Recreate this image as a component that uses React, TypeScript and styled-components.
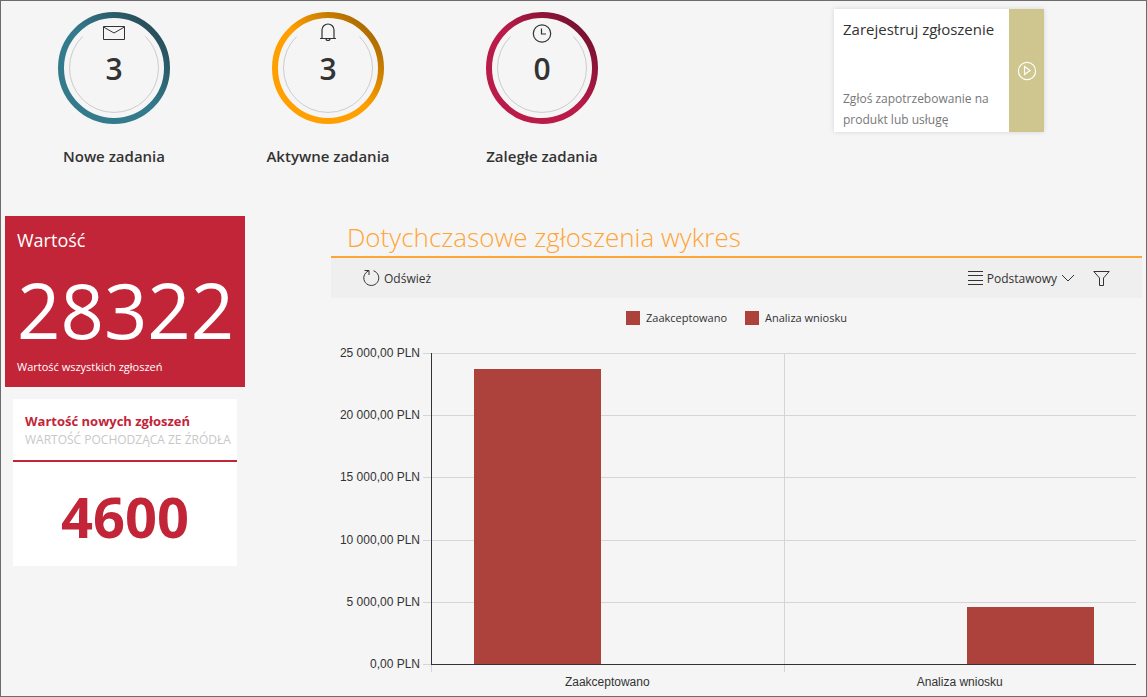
import React from 'react';
import styled, { createGlobalStyle } from 'styled-components';

const ui = '"Open Sans", "Noto Sans", sans-serif';
const red = '#c22538';
const barColor = '#ad413c';

const GlobalStyle = createGlobalStyle`
  *, *::before, *::after { box-sizing: border-box; }
  body { margin: 0; background: #f5f5f5; color: #333; font-family: ${ui}; }
  h2, h3, p, ul { margin: 0; padding: 0; font-weight: 400; }
  button { font: inherit; color: inherit; background: none; border: 0; padding: 0; cursor: pointer; }
`;

const Page = styled.main`
  min-height: 100vh;
  border: 1px solid #6d6b6d;
  padding: 8px 4px 0;
`;

const TopRow = styled.section`
  display: flex;
  align-items: flex-start;
  justify-content: space-between;
  padding: 0 98px 0 2px;
  height: 207px;
`;

const Tiles = styled.div`
  display: flex;
`;

const Tile = styled.a`
  display: flex;
  flex-direction: column;
  align-items: center;
  width: 214px;
  padding-top: 3px;
  color: inherit;
  text-decoration: none;
`;

const Ring = styled.div`
  display: grid;
  width: 112px;
  height: 112px;
  > * { grid-area: 1 / 1; }
`;

const RingContent = styled.div`
  display: flex;
  flex-direction: column;
  align-items: center;
  padding-top: 10px;
`;

const IconSlot = styled.span`
  display: flex;
  align-items: center;
  height: 22px;
`;

const Count = styled.span`
  margin-top: 4px;
  font-size: 30px;
  font-weight: 600;
  line-height: 42px;
`;

const TileLabel = styled.span`
  margin-top: 21px;
  font-size: 15px;
  font-weight: 600;
  line-height: 22px;
`;

const ActionCard = styled.a`
  display: flex;
  width: 210px;
  height: 123px;
  background: #fff;
  color: inherit;
  text-decoration: none;
  box-shadow: 0 0 5px rgba(0, 0, 0, 0.13);
`;

const ActionText = styled.div`
  flex: 1;
  display: flex;
  flex-direction: column;
  justify-content: space-between;
  padding: 9px 0 2px 9px;
  white-space: nowrap;
`;

const ActionTitle = styled.h3`
  font-size: 15px;
  line-height: 22px;
`;

const ActionNote = styled.p`
  color: #777;
  font-size: 12px;
  line-height: 21px;
  white-space: normal;
`;

const ActionStrip = styled.div`
  display: flex;
  align-items: center;
  justify-content: center;
  width: 35px;
  background: #cec68e;
`;

const Body = styled.div`
  display: grid;
  grid-template-columns: 240px minmax(0, 1fr);
  gap: 86px;
`;

const Side = styled.aside`
  display: flex;
  flex-direction: column;
  gap: 12px;
`;

const TotalCard = styled.section`
  height: 171px;
  padding: 12px;
  background: ${red};
  color: #fff;
  white-space: nowrap;
`;

const TotalTitle = styled.h3`
  font-size: 18px;
  line-height: 24px;
`;

const TotalValue = styled.p`
  margin-top: 14px;
  font-size: 76px;
  line-height: 88px;
`;

const TotalNote = styled.p`
  margin-top: 3px;
  font-size: 11px;
  line-height: 20px;
`;

const NewCard = styled.section`
  margin: 0 8px;
  background: #fff;
  color: ${red};
  white-space: nowrap;
`;

const NewHead = styled.header`
  height: 63px;
  padding: 12px 12px 0;
  border-bottom: 2px solid ${red};
`;

const NewTitle = styled.h3`
  font-size: 13px;
  font-weight: 700;
  line-height: 20px;
`;

const NewNote = styled.p`
  color: #c8c8c8;
  font-size: 12px;
  line-height: 17px;
`;

const NewValue = styled.p`
  height: 104px;
  padding-top: 9px;
  font-size: 56px;
  font-weight: 700;
  line-height: 90px;
  text-align: center;
`;

const Report = styled.section`
  min-width: 0;
`;

const ReportTitle = styled.h2`
  height: 42px;
  padding-left: 16px;
  border-bottom: 2px solid #ffa535;
  color: #ffa535;
  font-size: 26px;
  font-weight: 300;
  line-height: 42px;
  white-space: nowrap;
`;

const Toolbar = styled.div`
  display: flex;
  align-items: center;
  justify-content: space-between;
  height: 40px;
  padding: 0 32px;
  background: #efefef;
  font-size: 12px;
`;

const ToolGroup = styled.div`
  display: flex;
  gap: 18px;
`;

const ToolButton = styled.button`
  display: flex;
  align-items: center;
  gap: 4px;
  height: 40px;
`;

const Legend = styled.ul`
  display: flex;
  justify-content: center;
  gap: 18px;
  padding-top: 10px;
  list-style: none;
  font-size: 11px;
  line-height: 20px;
`;

const LegendItem = styled.li`
  display: flex;
  align-items: center;
  gap: 6px;
  &::before {
    content: '';
    width: 14px;
    height: 14px;
    background: ${barColor};
  }
`;

const Chart = styled.figure`
  display: grid;
  grid-template-columns: 89px 11px minmax(0, 1fr);
  margin: 25px 6px 0 0;
  font: 12px/16px "Liberation Sans", Arial, sans-serif;
`;

const Scale = styled.div`
  grid-area: 1 / 1;
  display: flex;
  flex-direction: column;
  justify-content: space-between;
  height: 327px;
  margin: -8px 0 -7px;
  text-align: right;
`;

const GridLines = styled.div`
  grid-area: 1 / 2 / auto / span 2;
  display: flex;
  flex-direction: column;
  height: 312px;
  margin-left: 3px;
  border-bottom: 1px solid #d5d5d5;
`;

const GridLine = styled.div`
  flex: 1;
  border-top: 1px solid #d5d5d5;
`;

const Plot = styled.div`
  grid-area: 1 / 3;
  display: flex;
  height: 312px;
  border: solid #333;
  border-width: 0 0 1px 1px;
`;

const Category = styled.div`
  flex: 1;
  display: flex;
  align-items: flex-end;
  gap: 5%;
  padding: 0 6%;
  & + & { border-left: 1px solid #d5d5d5; }
`;

const Bar = styled.div`
  flex: 1;
  background: ${barColor};
`;

const Names = styled.div`
  grid-area: 2 / 3;
  display: flex;
`;

const Name = styled.div`
  flex: 1;
  padding-top: 9px;
  text-align: center;
  background: linear-gradient(#d5d5d5, #d5d5d5) 0 0 / 1px 7px no-repeat;
`;

const line = { fill: 'none', stroke: '#333', strokeWidth: 1 };

const MailIcon = () => (
  <svg width="22" height="14" viewBox="0 0 22 14" {...line}>
    <path d="M.5.5h21v13H.5zM.5 1 11 7 21.5 1" />
  </svg>
);

const BellIcon = () => (
  <svg width="18" height="20" viewBox="0 0 18 20" {...line} strokeWidth={1.2}>
    <path d="M1 15.5h16M3 15.5V7a6 6 0 0 1 12 0v8.5M7 15.5a2 2 0 0 0 4 0" />
  </svg>
);

const ClockIcon = () => (
  <svg width="20" height="20" viewBox="0 0 20 20" {...line} strokeWidth={1.2}>
    <circle cx="10" cy="10.5" r="8.7" />
    <path d="M9.5 5.5V11H14" />
  </svg>
);

const PlayIcon = () => (
  <svg width="20" height="20" viewBox="0 0 20 20" fill="none" stroke="#fff" strokeWidth="1.2">
    <circle cx="10" cy="10" r="8.6" />
    <path d="M7.5 5.5v8l5.500-4z" />
  </svg>
);

const RefreshIcon = () => (
  <svg width="17" height="18" viewBox="0 0 17 18" {...line}>
    <path d="M1.500 1.500h4.500v4.500M5.500 2A7.500 7.500 0 1 0 10.500 1.800" />
  </svg>
);

const ListIcon = () => (
  <svg width="15" height="15" viewBox="0 0 15 15" {...line}>
    <path d="M0 .5h15M0 4.500h15M0 9.500h15M0 13.500h15" />
  </svg>
);

const ChevronIcon = () => (
  <svg width="14" height="8" viewBox="0 0 14 8" {...line}>
    <path d="M1 1l6 6 6-6" />
  </svg>
);

const FilterIcon = () => (
  <svg width="17" height="15" viewBox="0 0 17 15" {...line}>
    <path d="M.8.5h15.400L10.500 7v7.500h-4V7z" />
  </svg>
);

const tiles = [
  { id: 'new', label: 'Nowe zadania', count: 3, light: '#347a8d', dark: '#27505b', Icon: MailIcon },
  { id: 'active', label: 'Aktywne zadania', count: 3, light: '#ffa000', dark: '#b06d00', Icon: BellIcon },
  { id: 'late', label: 'Zaległe zadania', count: 0, light: '#ba1b49', dark: '#7c1232', Icon: ClockIcon },
];

const RingDrawing = ({ id, light, dark }: { id: string; light: string; dark: string }) => (
  <svg width="112" height="112" viewBox="0 0 112 112" fill="none">
    <defs>
      <linearGradient id={id} gradientUnits="userSpaceOnUse" x1="56" y1="56" x2="94" y2="18">
        <stop offset="0" stopColor={light} />
        <stop offset="1" stopColor={dark} />
      </linearGradient>
    </defs>
    <circle cx="56" cy="56" r="53" stroke={`url(#${id})`} strokeWidth="6" />
    <path d="M24.500 24.500a44.500 44.500 0 1 0 63 0" stroke="#ccc" />
  </svg>
);

const scale = ['25 000,00 PLN', '20 000,00 PLN', '15 000,00 PLN', '10 000,00 PLN', '5 000,00 PLN', '0,00 PLN'];
const scaleMax = 25000;
const categories = [
  { name: 'Zaakceptowano', values: [23722, 0] },
  { name: 'Analiza wniosku', values: [0, 4600] },
];

export default function App() {
  return (
    <>
      <GlobalStyle />
      <Page>
        <TopRow>
          <Tiles>
            {tiles.map(({ Icon, ...t }) => (
              <Tile key={t.id} href="#">
                <Ring>
                  <RingDrawing id={t.id} light={t.light} dark={t.dark} />
                  <RingContent>
                    <IconSlot><Icon /></IconSlot>
                    <Count>{t.count}</Count>
                  </RingContent>
                </Ring>
                <TileLabel>{t.label}</TileLabel>
              </Tile>
            ))}
          </Tiles>
          <ActionCard href="#">
            <ActionText>
              <ActionTitle>Zarejestruj zgłoszenie</ActionTitle>
              <ActionNote>Zgłoś zapotrzebowanie na produkt lub usługę</ActionNote>
            </ActionText>
            <ActionStrip><PlayIcon /></ActionStrip>
          </ActionCard>
        </TopRow>
        <Body>
          <Side>
            <TotalCard>
              <TotalTitle>Wartość</TotalTitle>
              <TotalValue>28322</TotalValue>
              <TotalNote>Wartość wszystkich zgłoszeń</TotalNote>
            </TotalCard>
            <NewCard>
              <NewHead>
                <NewTitle>Wartość nowych zgłoszeń</NewTitle>
                <NewNote>WARTOŚĆ POCHODZĄCA ZE ŹRÓDŁA</NewNote>
              </NewHead>
              <NewValue>4600</NewValue>
            </NewCard>
          </Side>
          <Report>
            <ReportTitle>Dotychczasowe zgłoszenia wykres</ReportTitle>
            <Toolbar>
              <ToolButton type="button"><RefreshIcon />Odśwież</ToolButton>
              <ToolGroup>
                <ToolButton type="button"><ListIcon />Podstawowy<ChevronIcon /></ToolButton>
                <ToolButton type="button" aria-label="Filtr"><FilterIcon /></ToolButton>
              </ToolGroup>
            </Toolbar>
            <Legend>
              {categories.map((c) => <LegendItem key={c.name}>{c.name}</LegendItem>)}
            </Legend>
            <Chart>
              <Scale>{scale.map((s) => <span key={s}>{s}</span>)}</Scale>
              <GridLines>{scale.slice(1).map((s) => <GridLine key={s} />)}</GridLines>
              <Plot>
                {categories.map((c) => (
                  <Category key={c.name}>
                    {c.values.map((v, i) => (
                      <Bar key={i} style={{ height: `${(v / scaleMax) * 100}%` }} />
                    ))}
                  </Category>
                ))}
              </Plot>
              <Names>{categories.map((c) => <Name key={c.name}>{c.name}</Name>)}</Names>
            </Chart>
          </Report>
        </Body>
      </Page>
    </>
  );
}
